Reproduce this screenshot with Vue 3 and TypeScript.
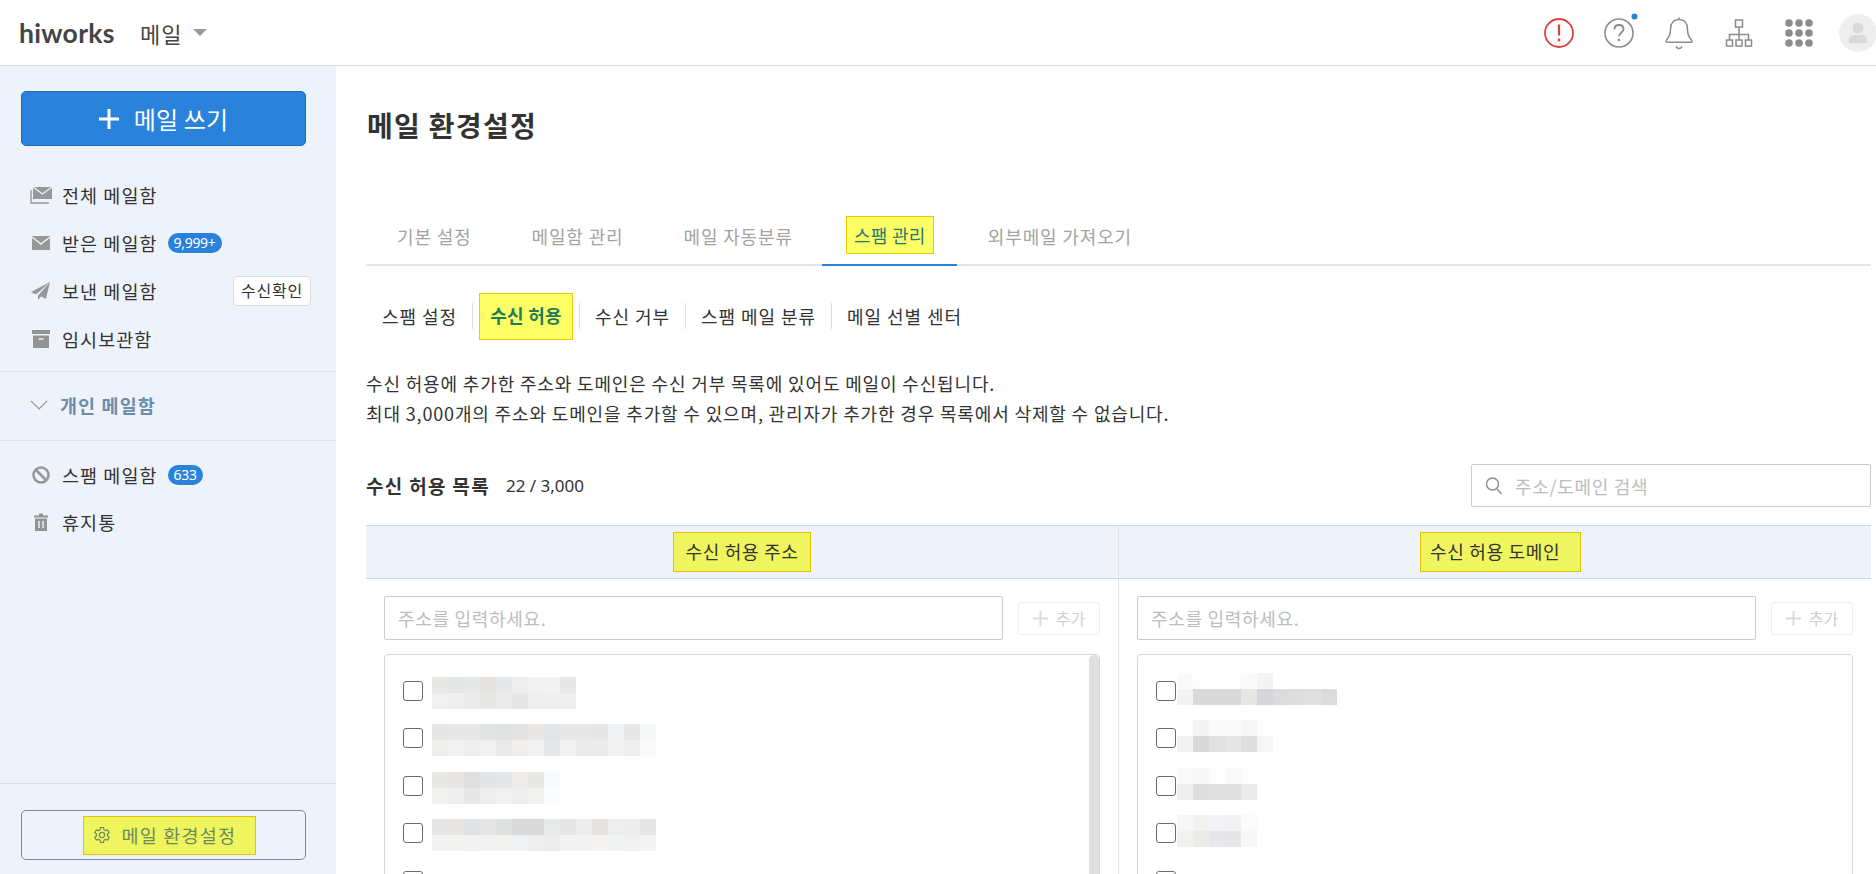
<script setup lang="ts">
const left: string[][][] = [
  [['e8e8e6','e4e6e5','e6e8e7','e6e4e1','e5e7e9','eeeeee','f2f2f2','f3f3f3','e8e8e8'],['f0f0f0','eeeeee','ebebeb','e8e8e6','ebebeb','e6e6e6','efefef','efefef','eeeeee']],
  [['e6e6e6','e8e8e8','e8e8e8','e2e3e3','e1e3e2','e3e3e3','eae8e6','e3e5e7','e8e8e8','e8e8e8','e6e6e6','eef0f2','e8e8e8','f6f8f7'],['eeeeec','f0f0f0','eeeeee','f0f0f0','e9e9e9','f0eeec','f1f1f1','e5e7e9','f1f1f1','ebebeb','ebebeb','f1f1f1','efefef','fafafa']],
  [['e8e8e6','e6e5e3','dfdfdf','e3e4e6','e4e6e8','eeecea','e8e8e6','f9fafc'],['f2f2f0','efefef','e8e8e8','eeeeee','f0f0f0','eeeeee','f0f0ee','fbfcfe']],
  [['e6e6e6','e8e5e2','dfe1e3','e6e6e6','dfe1e0','dadada','dadada','e8eae9','e6e6e6','ededed','e4e3e1','eeeeee','ecedec','e6e6e6'],['f3f3f3','f3f3f1','f1f1f1','f2f2f2','f2f2f0','f0f2f4','eeeeee','ececec','f3f3f3','f3f3f3','f6f4f2','f2f4f3','f1f1f1','f4f4f4']],
  [['ffffff','fbfbfb','ffffff','ffffff','fbfbfb','ffffff']],
]
const right: string[][][] = [
  [['fafafa','fdfdfd','fdfdfd','fdfdfd','f9fbfa','f3f3f3'],['f3f3f3','d9d9d9','d9d9d9','d9d9d9','e6e6e4','d4d6d9','dbdbdb','dedddb','dee0e2','dbdbdb']],
  [['fdfdfd','f4f4f4','fafafa','fafafa','f6f6f6','fdfdfd'],['f3f3f3','d9d9d9','e1e1e1','e5e5e5','dedede','f6f6f6']],
  [['f9f9f9','f7f7f7','fdfdfd','f9f9f9','fdfdfd'],['f0efed','dcdedd','dfdfdf','dfdfdf','e9eaec']],
  [['f6f6f6','f3f2f0','f3f4f7','f1f1f1','fbfbfb'],['f1f1ef','ecebe9','e6e7ea','e6e6e6','f6f7f6']],
  [['fdfdfd','ffffff','ffffff','ffffff','fdfdfd']],
]
const mainTabs = ['기본 설정', '메일함 관리', '메일 자동분류', '스팸 관리', '외부메일 가져오기']
</script>

<template>
  <div class="page">
    <header class="top">
      <span class="logo">hiworks</span>
      <span class="app">메일</span>
      <span class="caret"></span>
      <div class="tools">
        <svg class="tool" viewBox="0 0 40 40"><circle cx="20" cy="20" r="14" fill="none" stroke="#e03f3f" stroke-width="1.8"/><path d="M20 11.5v11" stroke="#e03f3f" stroke-width="2.2" fill="none"/><circle cx="20" cy="27" r="1.4" fill="#e03f3f"/></svg>
        <svg class="tool" viewBox="0 0 40 40"><circle cx="20" cy="20" r="14" fill="none" stroke="#8c8c8c" stroke-width="1.6"/><path d="M15.5 16.5c0-3 2-4.500 4.500-4.500s4.500 1.600 4.500 4.200c0 3.500-4.500 3.500-4.500 7" fill="none" stroke="#8c8c8c" stroke-width="1.8"/><circle cx="20" cy="27" r="1.300" fill="#8c8c8c"/><circle cx="35.500" cy="3.500" r="3" fill="#2a82db"/></svg>
        <svg class="tool" viewBox="0 0 40 40"><path d="M20 6.500c-6 0-8.500 4.500-8.500 10 0 5-1.500 8-4 10.500-1 1.200-.4 2.300 1 2.300h23c1.400 0 2-1.100 1-2.300-2.500-2.500-4-5.500-4-10.500 0-5.500-2.500-10-8.500-10z" fill="none" stroke="#8c8c8c" stroke-width="1.500"/><path d="M20 4.500v2M17 33.500c1.500 2.500 4.500 2.500 6 0" fill="none" stroke="#8c8c8c" stroke-width="1.500"/></svg>
        <svg class="tool" viewBox="0 0 40 40"><g fill="none" stroke="#8c8c8c" stroke-width="1.500"><rect x="16.500" y="7" width="7" height="7"/><rect x="7.500" y="27" width="6" height="6"/><rect x="17" y="27" width="6" height="6"/><rect x="26.500" y="27" width="6" height="6"/><path d="M20 14v13M10.500 27v-5.500h19V27"/></g></svg>
        <svg class="tool" viewBox="0 0 40 40"><g fill="#8c8c8c"><circle cx="10" cy="10" r="3.800"/><circle cx="20" cy="10" r="3.800"/><circle cx="30" cy="10" r="3.800"/><circle cx="10" cy="20" r="3.800"/><circle cx="20" cy="20" r="3.800"/><circle cx="30" cy="20" r="3.800"/><circle cx="10" cy="30" r="3.800"/><circle cx="20" cy="30" r="3.800"/><circle cx="30" cy="30" r="3.800"/></g></svg>
        <svg class="avatar" viewBox="0 0 38 38"><circle cx="19" cy="19" r="19" fill="#eeeeee"/><circle cx="19" cy="14" r="5.500" fill="#d9d9d9"/><path d="M10 29v-3c0-3 3-5 5-5h8c2 0 5 2 5 5v3z" fill="#d9d9d9"/></svg>
      </div>
    </header>

    <div class="body">
      <aside class="side">
        <button class="compose">
          <svg width="20" height="20" viewBox="0 0 20 20"><path d="M10 0v20M0 10h20" stroke="#fff" stroke-width="3"/></svg>
          <span>메일 쓰기</span>
        </button>
        <ul class="nav first">
          <li>
            <svg class="ni" viewBox="0 0 22 20"><path d="M3 2h19v12H3z" fill="#989898"/><path d="M3 2l9.500 7L22 2" fill="none" stroke="#eef3fb" stroke-width="1.300"/><path d="M1 5v13h18" fill="none" stroke="#989898" stroke-width="1.400"/></svg>
            <span>전체 메일함</span>
          </li>
          <li>
            <svg class="ni" viewBox="0 0 22 20"><path d="M2 3h18v14H2z" fill="#989898"/><path d="M2 4l9 7 9-7" fill="none" stroke="#eef3fb" stroke-width="1.400"/></svg>
            <span>받은 메일함</span><b class="badge">9,999+</b>
          </li>
          <li>
            <svg class="ni" viewBox="0 0 22 20"><path d="M20 1L1 11l5 2.500zM20 1L8 14.500V19l3-3.500 5 2.500z" fill="#989898"/></svg>
            <span>보낸 메일함</span><em class="chip">수신확인</em>
          </li>
          <li>
            <svg class="ni" viewBox="0 0 22 20"><path d="M2 1h18v4H2zM3 6.500h16V19H3z" fill="#939393"/><path d="M8.500 10h5" stroke="#eef3fb" stroke-width="1.500"/></svg>
            <span>임시보관함</span>
          </li>
        </ul>
        <div class="section">
          <svg width="18" height="10" viewBox="0 0 18 10"><path d="M1 1l8 8 8-8" fill="none" stroke="#999" stroke-width="1.200"/></svg>
          <span>개인 메일함</span>
        </div>
        <ul class="nav second">
          <li>
            <svg class="ni" viewBox="0 0 22 20"><circle cx="11" cy="10" r="7.500" fill="none" stroke="#989898" stroke-width="2.600"/><path d="M5.500 4.500l11 11" stroke="#989898" stroke-width="2.600"/></svg>
            <span>스팸 메일함</span><b class="badge">633</b>
          </li>
          <li>
            <svg class="ni" viewBox="0 0 22 20"><path d="M4 3.500h5V1.500h4v2h5V5.500H4zM5 6.500h12V19H5z" fill="#939393"/><path d="M9 9v7M13 9v7" stroke="#eef3fb" stroke-width="1.500"/></svg>
            <span>휴지통</span>
          </li>
        </ul>
        <div class="foot">
          <button class="settings">
            <span class="hl-soft setbox">
              <svg width="18" height="18" viewBox="0 0 24 24"><path d="M12 8.500a3.500 3.500 0 100 7 3.500 3.500 0 000-7zM10 2h4l.6 3 2.200 1.200 2.800-1 2 3.500-2.200 2v2.600l2.200 2-2 3.500-2.800-1-2.200 1.200-.6 3h-4l-.6-3-2.200-1.200-2.800 1-2-3.500 2.200-2v-2.600l-2.200-2 2-3.500 2.800 1L9.400 5z" fill="none" stroke="#6c8a5d" stroke-width="1.600"/></svg>
              <span>메일 환경설정</span>
            </span>
          </button>
        </div>
      </aside>

      <main class="main">
        <h1>메일 환경설정</h1>
        <nav class="tabs">
          <a v-for="t in mainTabs" :key="t" :class="{ on: t === '스팸 관리' }"><span>{{ t }}</span></a>
        </nav>
        <nav class="subs">
          <a>스팸 설정</a>
          <i></i>
          <a class="cur">수신 허용</a>
          <i></i>
          <a>수신 거부</a>
          <i></i>
          <a>스팸 메일 분류</a>
          <i></i>
          <a>메일 선별 센터</a>
        </nav>
        <p class="desc">수신 허용에 추가한 주소와 도메인은 수신 거부 목록에 있어도 메일이 수신됩니다.<br>최대 3,000개의 주소와 도메인을 추가할 수 있으며, 관리자가 추가한 경우 목록에서 삭제할 수 없습니다.</p>
        <div class="listhead">
          <strong>수신 허용 목록</strong>
          <span class="count">22 / 3,000</span>
          <label class="search">
            <svg width="18" height="20" viewBox="0 0 18 20"><circle cx="7.500" cy="8" r="6" fill="none" stroke="#8c8c8c" stroke-width="1.400"/><path d="M12 13l4.500 5" stroke="#8c8c8c" stroke-width="1.400"/></svg>
            <input placeholder="주소/도메인 검색">
          </label>
        </div>
        <section class="table">
          <div class="col a">
            <div class="colhead"><span class="hl-soft ha">수신 허용 주소</span></div>
            <div class="entry">
              <input class="addr" placeholder="주소를 입력하세요.">
              <button class="add"><svg width="15" height="15" viewBox="0 0 15 15"><path d="M7.500 0v15M0 7.500h15" stroke="#dcdcdc" stroke-width="2"/></svg>추가</button>
            </div>
            <div class="box">
              <div class="bar"></div>
              <div v-for="(r, i) in left" :key="i" class="row">
                <input type="checkbox" class="cb">
                <div class="mosaic ml">
                  <div v-for="(line, j) in r" :key="j" class="mline">
                    <span v-for="(c, k) in line" :key="k" class="cell" :style="{ background: '#' + c }"></span>
                  </div>
                </div>
              </div>
            </div>
          </div>
          <div class="col b">
            <div class="colhead"><span class="hl-soft hb">수신 허용 도메인</span></div>
            <div class="entry">
              <input class="addr" placeholder="주소를 입력하세요.">
              <button class="add"><svg width="15" height="15" viewBox="0 0 15 15"><path d="M7.500 0v15M0 7.500h15" stroke="#dcdcdc" stroke-width="2"/></svg>추가</button>
            </div>
            <div class="box">
              <div v-for="(r, i) in right" :key="i" class="row">
                <input type="checkbox" class="cb">
                <div class="mosaic mr">
                  <div v-for="(line, j) in r" :key="j" class="mline">
                    <span v-for="(c, k) in line" :key="k" class="cell" :style="{ background: '#' + c }"></span>
                  </div>
                </div>
              </div>
            </div>
          </div>
        </section>
      </main>
    </div>
  </div>
</template>

<style>
html, body { margin: 0; overflow: hidden; background: #fff; }
</style>

<style scoped>
* { box-sizing: border-box; }
.page { width: 1876px; height: 874px; overflow: hidden; display: flex; flex-direction: column; font-family: "Noto Sans CJK KR", "Noto Sans", sans-serif; color: #333; }
.top { height: 66px; flex: none; display: flex; align-items: center; border-bottom: 1px solid #dcdcdc; padding-left: 19px; }
.logo { font-family: "Lato", sans-serif; font-size: 26.500px; font-weight: 700; color: #444; letter-spacing: .3px; width: 121px; }
.app { font-size: 22px; color: #444; letter-spacing: 1px; width: 53px; }
.caret { width: 0; height: 0; border: 7.500px solid transparent; border-top: 7px solid #999; border-bottom: 0; }
.tools { margin-left: auto; margin-right: -1px; display: flex; align-items: center; gap: 20px; }
.tool { width: 40px; height: 40px; display: block; overflow: visible; }
.avatar { width: 38px; height: 38px; display: block; }

.body { flex: 1; display: flex; min-height: 0; }
.side { width: 336px; flex: none; background: #eef3fb; display: flex; flex-direction: column; padding-top: 25px; }
.compose { margin: 0 30px 0 21px; height: 55px; background: #2a82db; border: 1px solid #176dbf; border-radius: 5px; color: #fff; display: flex; align-items: center; justify-content: center; gap: 15px; font: inherit; font-size: 24px; letter-spacing: .2px; padding: 0; }
.nav { list-style: none; margin: 0; padding: 0; }
.nav li { height: 48px; display: flex; align-items: center; padding-left: 30px; font-size: 18.500px; letter-spacing: 1.050px; color: #333; }
.nav.first { margin-top: 25px; border-bottom: 1px solid #dde3ee; padding-bottom: 8px; }
.nav.second { border-top: 1px solid #dde3ee; padding-top: 10px; }
.nav.second li { height: 47.500px; }
.ni { width: 22px; height: 20px; margin-right: 10px; flex: none; }
.badge { margin-left: 10px; height: 20px; padding: 0 6px; border-radius: 10px; background: #2a82db; color: #fff; font-weight: 400; font-size: 14px; line-height: 20px; letter-spacing: -.3px; font-family: "Noto Sans", sans-serif; }
.chip { margin-left: auto; margin-right: 25px; width: 78px; height: 30px; background: #fff; border: 1px solid #ddd; border-radius: 5px; font-style: normal; font-size: 16px; letter-spacing: .8px; line-height: 27px; text-align: center; white-space: nowrap; }
.section { height: 68px; display: flex; align-items: center; gap: 12px; padding: 0 0 2px 30px; font-size: 18.500px; font-weight: 700; letter-spacing: 1.100px; color: #6e8cab; }
.foot { margin-top: auto; height: 91px; border-top: 1px solid #d8deea; padding: 26px 30px 0 21px; }
.settings { width: 100%; height: 50px; background: transparent; border: 1px solid #6e8cab; border-radius: 5px; padding: 0; display: flex; align-items: center; justify-content: center; font: inherit; }
.setbox { width: 173px; height: 39px; display: flex; align-items: center; gap: 11px; padding-left: 9px; font-size: 18.500px; letter-spacing: 1.200px; color: #6c8a5d; margin-left: 11px; white-space: nowrap; }
.hl-soft { background: #eff55e; border: 1px solid #e8c200; }

.main { flex: 1; min-width: 0; padding: 0 5px 0 30px; }
h1 { margin: 0; padding: 38px 0 0 1px; height: 175px; font-size: 28px; line-height: 42px; font-weight: 700; color: #333; letter-spacing: 1.300px; }
.tabs { height: 49px; margin-top: -24px; display: flex; border-bottom: 2px solid #e6e6e6; padding-left: 1px; align-items: flex-end; }
.tabs a { height: 49px; margin-bottom: -2px; display: flex; align-items: center; padding: 0 30px 12px; font-size: 18px; color: #a3a3a3; letter-spacing: .85px; white-space: nowrap; }
.tabs a.on { padding: 0 12px 12px; margin: 0 1px -2px -1px; border-bottom: 2px solid #2a82db; width: 135px; justify-content: center; }
.tabs a.on span { width: 88px; height: 38px; line-height: 36px; text-align: center; background: #ffff66; border: 1px solid #f2c800; color: #1f7a6e; letter-spacing: .3px; margin-left: 1px; }
.subs { margin-top: 25px; height: 50px; display: flex; align-items: center; padding-left: 16px; font-size: 18px; letter-spacing: .95px; }
.subs a { white-space: nowrap; }
.subs i { width: 1px; height: 26px; background: #ddd; margin: 0 15px; }
.subs a.cur { margin: 0 -9px; width: 94px; height: 47px; line-height: 43px; text-align: center; background: #ffff66; border: 1px solid #f2c800; color: #1d7d5a; font-weight: 700; letter-spacing: .2px; }
.desc { margin: 27px 0 0; font-size: 18px; line-height: 30px; letter-spacing: .85px; color: #333; }
.listhead { margin-top: 36px; height: 43px; display: flex; align-items: center; }
.listhead strong { font-size: 19px; font-weight: 700; letter-spacing: 1.300px; margin-right: 16px; }
.count { font-family: "Noto Sans", sans-serif; font-size: 17px; }
.search { margin-left: auto; width: 400px; height: 43px; border: 1px solid #ccc; border-radius: 2px; display: flex; align-items: center; padding-left: 13px; gap: 12px; }
.search input, .addr { border: 0; outline: 0; padding: 0; font: inherit; font-size: 18px; letter-spacing: .7px; background: transparent; width: 300px; }
input::placeholder { color: #bdbdbd; opacity: 1; }
.table { margin-top: 18px; display: flex; }
.col { flex: 1 1 0; min-width: 0; }
.col.a { flex: none; width: 753px; border-right: 1px solid #e0e3e8; }
.colhead { height: 54px; background: #eef3fb; border-top: 1px solid #d3d7de; border-bottom: 1px solid #d3d7de; display: flex; align-items: center; justify-content: center; font-size: 18px; color: #333; letter-spacing: .7px; white-space: nowrap; }
.ha { width: 138px; height: 40px; line-height: 37px; text-align: center; }
.hb { width: 161px; height: 40px; line-height: 37px; padding-left: 9px; margin-left: 11px; }
.entry { margin-top: 17px; display: flex; align-items: center; gap: 15px; }
.col .entry, .col .box { margin-left: 18px; margin-right: 18px; }
.addr { flex: 1; min-width: 0; height: 44px; border: 1px solid #ccc; border-radius: 2px; padding-left: 13px; }
.add { width: 82px; height: 33px; flex: none; background: #fff; border: 1px solid #eeeeee; border-radius: 3px; display: flex; align-items: center; justify-content: center; gap: 8px; padding: 0; font: inherit; font-size: 16px; color: #cfcfcf; }
.box { position: relative; margin-top: 14px; height: 300px; border: 1px solid #d5d5d5; border-radius: 4px; padding: 12px 0 0 18px; overflow: hidden; }
.bar { position: absolute; top: 0; right: 0; bottom: 0; width: 10px; background: #e0e0e0; border-radius: 5px 5px 0 0; }
.row { height: 47.500px; display: flex; align-items: center; }
.cb { appearance: none; -webkit-appearance: none; margin: 0; width: 20px; height: 20px; flex: none; background: #fff; border: 1.500px solid #6b6b6b; border-radius: 3px; }
.mosaic { display: flex; flex-direction: column; }
.ml { margin-left: 9px; margin-top: 4px; }
.mr { margin-left: 1px; margin-top: -4px; }
.mline { display: flex; height: 16px; }
.cell { width: 16px; height: 16px; display: block; }
</style>
